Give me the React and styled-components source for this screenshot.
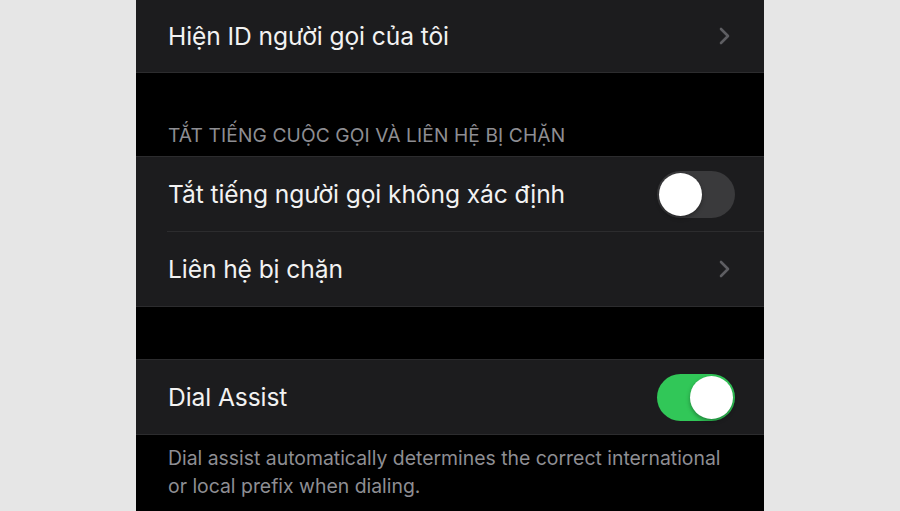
import React from 'react';
import styled, { createGlobalStyle } from 'styled-components';

const GlobalStyle = createGlobalStyle`
  html, body {
    margin: 0;
    padding: 0;
    background: #e6e6e6;
  }
  body {
    font-family: "Inter", "Noto Sans", sans-serif;
    -webkit-font-smoothing: antialiased;
  }
  * {
    box-sizing: border-box;
  }
`;

const Page = styled.div`
  display: flex;
  justify-content: center;
  height: 511px;
  overflow: hidden;
`;

const Screen = styled.div`
  width: 628px;
  background: #000;
  display: flex;
  flex-direction: column;
`;

const Group = styled.div`
  background: #1c1c1e;
  border-bottom: 1px solid #2c2c2e;
  border-top: ${(p) => (p.top ? '1px solid #2c2c2e' : 'none')};
`;

const Row = styled.div`
  height: ${(p) => p.h || 74}px;
  display: flex;
  align-items: center;
  justify-content: space-between;
  padding: 0 30px 0 32px;

  & + & {
    border-top: 1px solid #2c2c2e;
    border-image: linear-gradient(to right, transparent 32px, #2c2c2e 32px) 1;
  }
`;

const Label = styled.span`
  color: #f2f2f2;
  font-size: 24.6px;
  letter-spacing: -0.1px;
`;

const Gap = styled.div`
  height: ${(p) => p.h}px;
  display: flex;
  align-items: flex-end;
  padding: 0 32px ${(p) => p.pb || 0}px;
`;

const Header = styled.span`
  color: #8e8e93;
  font-size: 19.2px;
  letter-spacing: 0.1px;
`;

const Footer = styled.p`
  margin: 0;
  padding: 9px 30px 0 32px;
  color: #8e8e93;
  font-size: 19.4px;
  line-height: 28px;
`;

const Track = styled.div`
  width: 78px;
  height: 47px;
  border-radius: 24px;
  background: ${(p) => (p.on ? '#31c758' : '#3a3a3c')};
  display: flex;
  align-items: center;
  justify-content: ${(p) => (p.on ? 'flex-end' : 'flex-start')};
  padding: 0 2px;
  margin-right: -1px;
`;

const Knob = styled.div`
  width: 43px;
  height: 43px;
  border-radius: 50%;
  background: #fff;
  box-shadow: 0 2px 4px rgba(0, 0, 0, 0.35);
`;

const Chevron = () => (
  <svg width="14" height="18" viewBox="0 0 14 18" style={{ marginRight: 2 }}>
    <path d="M3 2 L10 9 L3 16" fill="none" stroke="#5e5e62" strokeWidth="2.6" strokeLinecap="round" strokeLinejoin="round" />
  </svg>
);

const Toggle = ({ on }) => (
  <Track on={on ? 1 : 0}>
    <Knob />
  </Track>
);

export default function App() {
  return (
    <>
      <GlobalStyle />
      <Page>
        <Screen>
          <Group>
            <Row h={72}>
              <Label>Hiện ID người gọi của tôi</Label>
              <Chevron />
            </Row>
          </Group>
          <Gap h={83} pb={9}>
            <Header>TẮT TIẾNG CUỘC GỌI VÀ LIÊN HỆ BỊ CHẶN</Header>
          </Gap>
          <Group top>
            <Row>
              <Label>Tắt tiếng người gọi không xác định</Label>
              <Toggle />
            </Row>
            <Row h={75}>
              <Label>Liên hệ bị chặn</Label>
              <Chevron />
            </Row>
          </Group>
          <Gap h={52} />
          <Group top>
            <Row>
              <Label>Dial Assist</Label>
              <Toggle on />
            </Row>
          </Group>
          <Footer>
            Dial assist automatically determines the correct international
            or local prefix when dialing.
          </Footer>
        </Screen>
      </Page>
    </>
  );
}
